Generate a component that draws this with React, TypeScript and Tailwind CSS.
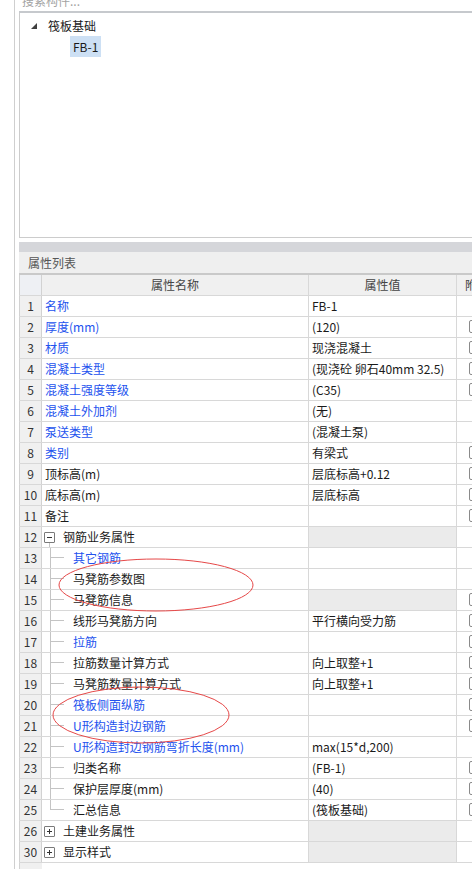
import React from "react";

type Row = {
  n: number;
  label: string;
  value?: string;
  blue?: boolean;
  cb?: boolean;
  gray?: boolean;
  kind?: "child" | "lastchild" | "open" | "closed" | "plain";
};

const rows: Row[] = [
  { n: 1, label: "名称", value: "FB-1", blue: true },
  { n: 2, label: "厚度(mm)", value: "(120)", blue: true, cb: true },
  { n: 3, label: "材质", value: "现浇混凝土", blue: true, cb: true },
  { n: 4, label: "混凝土类型", value: "(现浇砼 卵石40mm 32.5)", blue: true, cb: true },
  { n: 5, label: "混凝土强度等级", value: "(C35)", blue: true, cb: true },
  { n: 6, label: "混凝土外加剂", value: "(无)", blue: true },
  { n: 7, label: "泵送类型", value: "(混凝土泵)", blue: true },
  { n: 8, label: "类别", value: "有梁式", blue: true, cb: true },
  { n: 9, label: "顶标高(m)", value: "层底标高+0.12", cb: true },
  { n: 10, label: "底标高(m)", value: "层底标高", cb: true },
  { n: 11, label: "备注", value: "", cb: true },
  { n: 12, label: "钢筋业务属性", gray: true, kind: "open" },
  { n: 13, label: "其它钢筋", blue: true, kind: "child" },
  { n: 14, label: "马凳筋参数图", kind: "child" },
  { n: 15, label: "马凳筋信息", gray: true, cb: true, kind: "child" },
  { n: 16, label: "线形马凳筋方向", value: "平行横向受力筋", cb: true, kind: "child" },
  { n: 17, label: "拉筋", blue: true, cb: true, kind: "child" },
  { n: 18, label: "拉筋数量计算方式", value: "向上取整+1", cb: true, kind: "child" },
  { n: 19, label: "马凳筋数量计算方式", value: "向上取整+1", cb: true, kind: "child" },
  { n: 20, label: "筏板侧面纵筋", blue: true, cb: true, kind: "child" },
  { n: 21, label: "U形构造封边钢筋", blue: true, cb: true, kind: "child" },
  { n: 22, label: "U形构造封边钢筋弯折长度(mm)", value: "max(15*d,200)", blue: true, kind: "child" },
  { n: 23, label: "归类名称", value: "(FB-1)", cb: true, kind: "child" },
  { n: 24, label: "保护层厚度(mm)", value: "(40)", cb: true, kind: "child" },
  { n: 25, label: "汇总信息", value: "(筏板基础)", cb: true, kind: "lastchild" },
  { n: 26, label: "土建业务属性", gray: true, kind: "closed" },
  { n: 30, label: "显示样式", gray: true, kind: "closed" },
];

function Box({ open, line }: { open: boolean; line?: boolean }) {
  return (
    <div className="ml-[2px] flex h-full w-[11px] flex-col items-center">
      <div className="flex-1" />
      <div className="flex h-[11px] w-[11px] items-center justify-center rounded-[1px] border border-[#7a7a7a] bg-white">
        <div className="relative h-[1px] w-[5px] bg-[#333]">
          {!open && <div className="absolute left-[2px] top-[-2px] h-[5px] w-[1px] bg-[#333]" />}
        </div>
      </div>
      <div className="flex flex-1 justify-center">{line && <div className="h-full w-px bg-[#c4c4c4]" />}</div>
    </div>
  );
}

function NameCell({ r }: { r: Row }) {
  const color = r.blue ? "text-[#2352ee]" : "text-[#1a1a1a]";
  if (r.kind === "child" || r.kind === "lastchild") {
    return (
      <div className="flex h-full items-stretch pl-[8px]">
        <div className="flex w-[14px] flex-col">
          <div className="h-[10px] border-b border-l border-[#c4c4c4]" />
          <div className={r.kind === "child" ? "flex-1 border-l border-[#c4c4c4]" : "flex-1"} />
        </div>
        <div className={`ml-[9px] flex items-center whitespace-nowrap ${color}`}>{r.label}</div>
      </div>
    );
  }
  if (r.kind === "open" || r.kind === "closed") {
    return (
      <div className="flex h-full items-stretch">
        <Box open={r.kind === "open"} line={r.kind === "open"} />
        <div className={`ml-[8px] flex items-center whitespace-nowrap ${color}`}>{r.label}</div>
      </div>
    );
  }
  return <div className={`flex h-full items-center whitespace-nowrap pl-[3px] ${color}`}>{r.label}</div>;
}

function PropRow({ r }: { r: Row }) {
  return (
    <div className="flex h-[21px] border-b border-[#d8d8d8]">
      <div className="flex w-[23px] shrink-0 items-center justify-center border-l border-r border-[#d2d2d2] bg-[#f0f0f0] text-[#333]">
        {r.n}
      </div>
      <div className="w-[267px] shrink-0 overflow-hidden border-r border-[#d8d8d8] bg-white">
        <NameCell r={r} />
      </div>
      <div
        className={`flex w-[148px] shrink-0 items-center overflow-hidden whitespace-nowrap border-r border-[#d8d8d8] pl-[3px] text-[#1a1a1a] ${
          r.gray ? "bg-[#ebebeb]" : "bg-white"
        }`}
      >
        {r.value}
      </div>
      <div className="flex-1 bg-white pl-[12px] pt-[3px]">
        {r.cb && <div className="h-[13px] w-[13px] rounded-[2px] border border-[#8a8a8a]" />}
      </div>
    </div>
  );
}

export default function App() {
  return (
    <div
      className="relative h-[869px] w-[472px] overflow-hidden bg-white text-[12px] leading-[16px]"
      style={{ fontFamily: '"Noto Sans CJK SC", "Noto Sans", sans-serif' }}
    >
      <div className="flex h-full pl-[14px]">
        <div className="flex h-full w-[458px] shrink-0 flex-col border-l border-[#cfcfcf] pl-[4px]">
          {/* search box, cut off at top */}
          <div className="h-[11px] overflow-hidden">
            <div className="mt-[-7px] whitespace-nowrap pl-[3px] text-[#a3a3a3]">搜索构件...</div>
          </div>
          <div className="h-[2px] w-[520px] bg-[#c6c9cd]" />
          {/* tree panel */}
          <div className="h-[225px] w-[520px] border-b border-l border-[#cccccc] pt-[3px]">
            <div className="flex h-[20px] items-center">
              <svg width="7" height="7" viewBox="0 0 7 7" className="ml-[11px]">
                <polygon points="6,0 6,6 0,6" fill="#404040" />
              </svg>
              <span className="ml-[10px] text-[#1a1a1a]">筏板基础</span>
            </div>
            <div className="flex">
              <div className="ml-[50px] flex h-[21px] items-center bg-[#cde0f4] px-[3px] text-[#1a1a1a]">FB-1</div>
            </div>
          </div>
          <div className="h-[4px]" />
          <div className="h-[10px] w-[520px] bg-[#d5d6da]" />
          <div className="flex h-[21px] w-[520px] items-center bg-[#efefef] pl-[9px] text-[#555]">属性列表</div>
          <div className="h-[2px] w-[520px] bg-[#c9c9c9]" />
          {/* header */}
          <div className="flex h-[21px] w-[520px] border-b border-[#d8d8d8] bg-[#f0f0f0] text-[#444]">
            <div className="w-[23px] shrink-0 border-l border-r border-[#d2d2d2] bg-[#eef0f4]" />
            <div className="flex w-[267px] shrink-0 items-center justify-center border-r border-[#d8d8d8]">属性名称</div>
            <div className="flex w-[148px] shrink-0 items-center justify-center border-r border-[#d8d8d8]">属性值</div>
            <div className="flex flex-1 items-center pl-[8px]">附</div>
          </div>
          <div className="w-[520px]">
            {rows.map((r) => (
              <PropRow key={r.n} r={r} />
            ))}
          </div>
          <div className="flex flex-1">
            <div className="w-[23px] shrink-0 border-l border-[#d2d2d2] bg-[#f0f0f0]" />
          </div>
        </div>
      </div>
      {/* red annotation ellipses */}
      <svg className="pointer-events-none absolute left-0 top-0" width="472" height="869" viewBox="0 0 472 869">
        <ellipse cx="156" cy="585" rx="97" ry="26" fill="none" stroke="#e64848" strokeWidth="1" />
        <ellipse cx="141" cy="715" rx="88" ry="28" fill="none" stroke="#e64848" strokeWidth="1" />
      </svg>
    </div>
  );
}
